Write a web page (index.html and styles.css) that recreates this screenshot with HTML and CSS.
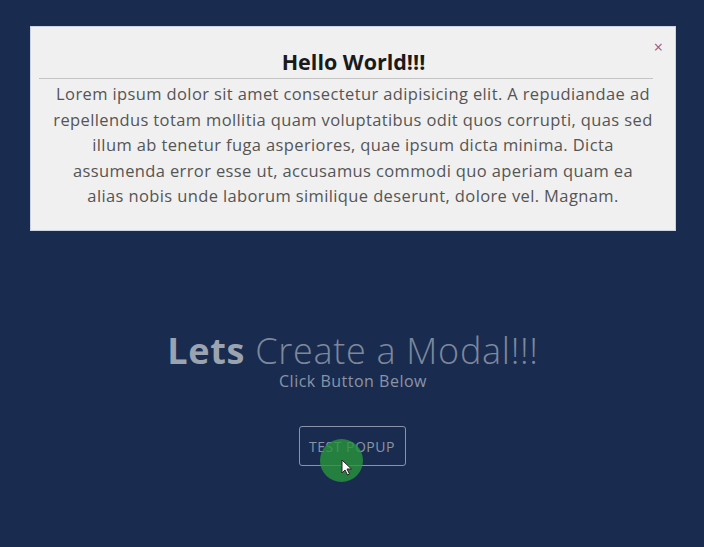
FILE: index.html
```html
<!DOCTYPE html>
<html>
<head>
<meta charset="utf-8">
<link rel="stylesheet" href="styles.css">
</head>
<body>
<div class="modal">
  <span class="close">&times;</span>
  <div class="modal-inner">
    <h2 class="modal-title">Hello World!!!</h2>
    <p class="modal-text">Lorem ipsum dolor sit amet consectetur adipisicing elit. A repudiandae ad<br>repellendus totam mollitia quam voluptatibus odit quos corrupti, quas sed<br>illum ab tenetur fuga asperiores, quae ipsum dicta minima. Dicta<br>assumenda error esse ut, accusamus commodi quo aperiam quam ea<br>alias nobis unde laborum similique deserunt, dolore vel. Magnam.</p>
  </div>
</div>
<main class="hero">
  <h1 class="hero-title"><strong>Lets</strong> Create a Modal!!!</h1>
  <p class="hero-sub">Click Button Below</p>
  <div class="btn-wrap">
    <button class="btn">TEST POPUP</button>
    <span class="click-dot"></span>
    <svg class="cursor" width="12" height="17" viewBox="0 0 12 17"><path d="M1 1 L1 14 L4 11 L6.5 16 L8.5 15 L6 10 L10.5 10 Z" fill="#fff" stroke="#222" stroke-width="1"/></svg>
  </div>
</main>
</body>
</html>
```
FILE: styles.css
```css
html, body {
  margin: 0;
  padding: 0;
}
body {
  background: #192c4f;
  font-family: "Open Sans", "Liberation Sans", sans-serif;
  height: 547px;
  overflow: hidden;
}
.modal {
  position: relative;
  box-sizing: border-box;
  width: 646px;
  height: 205px;
  margin: 26px 0 0 30px;
  background: #f0f0f0;
  border: 1px solid #c9d3e3;
}
.close {
  position: absolute;
  right: 12px;
  top: 12px;
  color: #a0538a;
  font-size: 16px;
  line-height: 16px;
}
.modal-inner {
  padding: 22px 8px 0 8px;
  text-align: center;
}
.modal-title {
  margin: 0 14px 0 0;
  padding: 0 0 3px 15px;
  font-size: 21.5px;
  font-weight: 700;
  color: #1a1a1a;
  line-height: 26px;
  border-bottom: 1px solid #c4c4c4;
}
.modal-text {
  margin: 2px 0 0 0;
  font-size: 16.5px;
  letter-spacing: 0.38px;
  line-height: 25.5px;
  color: #555;
  white-space: nowrap;
}
.hero {
  text-align: center;
  padding-top: 101px;
  padding-left: 2px;
}
.hero-title {
  margin: 0;
  font-size: 36px;
  font-weight: 300;
  letter-spacing: 0.7px;
  line-height: 38px;
  color: #7d889c;
}
.hero-title strong {
  font-weight: 700;
  color: #9ba3b1;
}
.hero-sub {
  margin: 1px 0 0;
  font-size: 16px;
  letter-spacing: 0.5px;
  line-height: 20px;
  color: #8a94a7;
}
.btn-wrap {
  position: relative;
  display: inline-block;
  margin: 35px 0 0 -2px;
}
.btn {
  display: block;
  box-sizing: border-box;
  width: 107px;
  height: 40px;
  background: transparent;
  border: 1px solid #8a94a7;
  border-radius: 3px;
  color: #8a94a7;
  font-family: "Open Sans", "Liberation Sans", sans-serif;
  font-size: 14px;
  letter-spacing: 0.5px;
  padding: 0;
}
.click-dot {
  position: absolute;
  left: 21px;
  top: 13px;
  width: 43px;
  height: 43px;
  border-radius: 50%;
  background: rgba(40, 150, 60, 0.8);
}
.cursor {
  position: absolute;
  left: 42px;
  top: 33px;
}
```
